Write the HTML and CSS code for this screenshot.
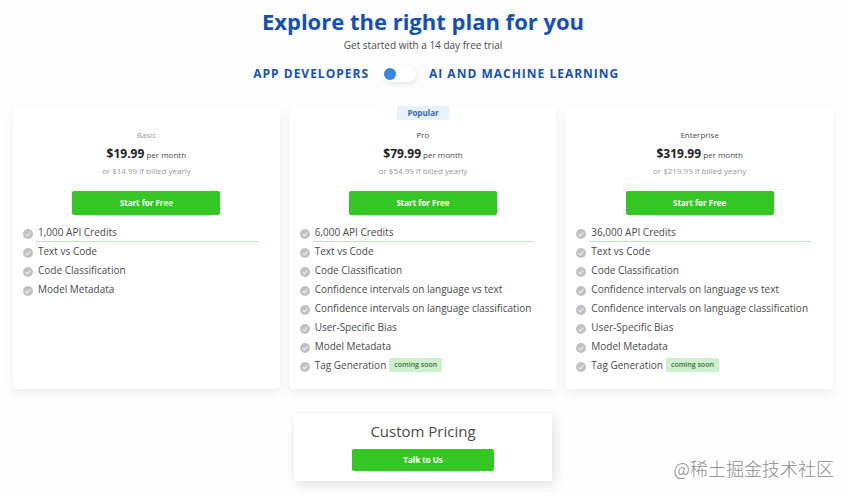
FILE: index.html
```html
<!DOCTYPE html>
<html lang="en">
<head>
<meta charset="utf-8">
<meta name="viewport" content="width=device-width, initial-scale=1">
<title>Pricing</title>
<link rel="stylesheet" href="styles.css">
</head>
<body>
<svg class="sprite" aria-hidden="true">
  <symbol id="check" viewBox="0 0 10 10">
    <circle cx="5" cy="5" r="5" fill="#c2c2c2"/>
    <path d="M2.7 5.3l1.6 1.5 3-3.3" fill="none" stroke="#f4f4f4" stroke-width="1.1"/>
  </symbol>
</svg>
<main class="page">
  <header class="intro">
    <h1 class="title">Explore the right plan for you</h1>
    <p class="subtitle">Get started with a 14 day free trial</p>
    <div class="audience">
      <label for="audience">APP DEVELOPERS</label>
      <input class="switch" type="checkbox" role="switch" id="audience">
      <label for="audience">AI AND MACHINE LEARNING</label>
    </div>
  </header>

  <section class="plans">
    <article class="card">
      <div class="badge-row"></div>
      <h2 class="name muted">Basic</h2>
      <p class="price"><strong>$19.99</strong> per month</p>
      <p class="yearly">or $14.99 if billed yearly</p>
      <button class="button" type="button">Start for Free</button>
      <ul class="features">
        <li><svg class="check"><use href="#check"/></svg><span>1,000 API Credits</span></li>
        <li><svg class="check"><use href="#check"/></svg><span>Text vs Code</span></li>
        <li><svg class="check"><use href="#check"/></svg><span>Code Classification</span></li>
        <li><svg class="check"><use href="#check"/></svg><span>Model Metadata</span></li>
      </ul>
    </article>

    <article class="card">
      <div class="badge-row"><span class="popular">Popular</span></div>
      <h2 class="name">Pro</h2>
      <p class="price"><strong>$79.99</strong> per month</p>
      <p class="yearly">or $54.99 if billed yearly</p>
      <button class="button" type="button">Start for Free</button>
      <ul class="features">
        <li><svg class="check"><use href="#check"/></svg><span>6,000 API Credits</span></li>
        <li><svg class="check"><use href="#check"/></svg><span>Text vs Code</span></li>
        <li><svg class="check"><use href="#check"/></svg><span>Code Classification</span></li>
        <li><svg class="check"><use href="#check"/></svg><span>Confidence intervals on language vs text</span></li>
        <li><svg class="check"><use href="#check"/></svg><span>Confidence intervals on language classification</span></li>
        <li><svg class="check"><use href="#check"/></svg><span>User-Specific Bias</span></li>
        <li><svg class="check"><use href="#check"/></svg><span>Model Metadata</span></li>
        <li><svg class="check"><use href="#check"/></svg><span>Tag Generation</span><em class="soon">coming soon</em></li>
      </ul>
    </article>

    <article class="card">
      <div class="badge-row"></div>
      <h2 class="name">Enterprise</h2>
      <p class="price"><strong>$319.99</strong> per month</p>
      <p class="yearly">or $219.99 if billed yearly</p>
      <button class="button" type="button">Start for Free</button>
      <ul class="features">
        <li><svg class="check"><use href="#check"/></svg><span>36,000 API Credits</span></li>
        <li><svg class="check"><use href="#check"/></svg><span>Text vs Code</span></li>
        <li><svg class="check"><use href="#check"/></svg><span>Code Classification</span></li>
        <li><svg class="check"><use href="#check"/></svg><span>Confidence intervals on language vs text</span></li>
        <li><svg class="check"><use href="#check"/></svg><span>Confidence intervals on language classification</span></li>
        <li><svg class="check"><use href="#check"/></svg><span>User-Specific Bias</span></li>
        <li><svg class="check"><use href="#check"/></svg><span>Model Metadata</span></li>
        <li><svg class="check"><use href="#check"/></svg><span>Tag Generation</span><em class="soon">coming soon</em></li>
      </ul>
    </article>
  </section>

  <section class="custom">
    <h2 class="custom-title">Custom Pricing</h2>
    <button class="button" type="button">Talk to Us</button>
  </section>
</main>
<p class="watermark" lang="zh">@稀土掘金技术社区</p>
</body>
</html>
```

FILE: styles.css
```css
* {
  box-sizing: border-box;
}

body {
  margin: 0;
  background: #fefefe;
  color: #4a4a4a;
  font-family: "Open Sans", "Noto Sans CJK SC", sans-serif;
  font-size: 10px;
}

h1, h2, p, ul {
  margin: 0;
  padding: 0;
}

.sprite {
  position: absolute;
  width: 0;
  height: 0;
}

.page {
  padding: 5px 17px 15px 13px;
}

.intro {
  text-align: center;
}

.title {
  color: #1450b8;
  font-size: 22px;
  line-height: 32px;
  font-weight: 700;
}

.subtitle {
  line-height: 16px;
}

.audience {
  display: grid;
  grid-template-columns: 1fr auto 1fr;
  align-items: center;
  gap: 13px;
  margin-top: 12px;
  padding-right: 48px;
  color: #1450b8;
  font-size: 12px;
  line-height: 18px;
  font-weight: 700;
  letter-spacing: 1px;
}

.audience label:first-child {
  text-align: right;
}

.audience label:last-child {
  text-align: left;
}

.switch {
  appearance: none;
  display: flex;
  align-items: center;
  width: 34px;
  height: 16px;
  margin: 0;
  padding: 0 2px;
  border-radius: 8px;
  background: #fff;
  box-shadow: 1px 2px 5px rgba(0, 0, 0, 0.1);
}

.switch::before {
  content: "";
  width: 12px;
  height: 12px;
  border-radius: 50%;
  background: #3586e0;
}

.switch:checked {
  justify-content: flex-end;
}

.plans {
  display: grid;
  grid-template-columns: repeat(3, 1fr);
  gap: 10px;
  margin-top: 23px;
}

.card {
  display: flex;
  flex-direction: column;
  align-items: center;
  padding: 0 10px 15px;
  border-radius: 4px;
  background: #fff;
  box-shadow: 0 5px 12px rgba(0, 0, 0, 0.07);
}

.badge-row {
  height: 14px;
}

.popular {
  display: block;
  padding: 0 10px;
  background: #e6f1fc;
  color: #3b68b5;
  font-size: 8px;
  line-height: 14px;
  font-weight: 700;
}

.name {
  margin-top: 8px;
  font-size: 8px;
  line-height: 14px;
  font-weight: 400;
}

.name.muted {
  color: #999;
}

.price {
  margin-top: 3px;
  font-size: 8px;
  line-height: 18px;
}

.price strong {
  color: #222;
  font-size: 12px;
}

.yearly {
  color: #999;
  font-size: 8px;
  line-height: 14px;
}

.button {
  width: 60%;
  height: 24px;
  margin-top: 13px;
  padding: 0;
  border: 0;
  border-radius: 2px;
  background: #34c724;
  color: #fff;
  font: 700 8px/24px "Open Sans", sans-serif;
}

.features {
  align-self: stretch;
  display: grid;
  gap: 1px;
  margin-top: 8px;
  list-style: none;
}

.features li {
  display: flex;
  align-items: center;
  height: 18px;
  font-size: 10px;
  line-height: 18px;
}

.features span {
  margin-left: 3px;
  padding-left: 2px;
}

.features li:first-child span {
  flex: 1;
  margin-right: 12px;
  border-bottom: 1px solid #bfe6c0;
}

.check {
  width: 10px;
  height: 10px;
  margin-top: 4px;
}

.soon {
  margin-left: 3px;
  padding: 0 5px;
  border-radius: 2px;
  background: #cdf1cd;
  color: #3f6b45;
  font-size: 7px;
  line-height: 14px;
  font-style: normal;
  font-weight: 600;
}

.custom {
  display: flex;
  flex-direction: column;
  align-items: center;
  width: 100%;
  max-width: 258px;
  margin: 25px auto 0;
  padding: 5px 0 10px;
  background: #fff;
  box-shadow: 2px 4px 12px rgba(0, 0, 0, 0.12);
}

.custom-title {
  font-size: 15px;
  line-height: 24px;
  font-weight: 400;
}

.custom .button {
  width: 55%;
  height: 22px;
  margin-top: 6px;
  line-height: 22px;
}

.watermark {
  position: absolute;
  right: 16px;
  bottom: 16px;
  color: #8c8c8c;
  font-family: "Noto Sans CJK SC", sans-serif;
  font-size: 18px;
  font-weight: 300;
  line-height: 24px;
}
```
